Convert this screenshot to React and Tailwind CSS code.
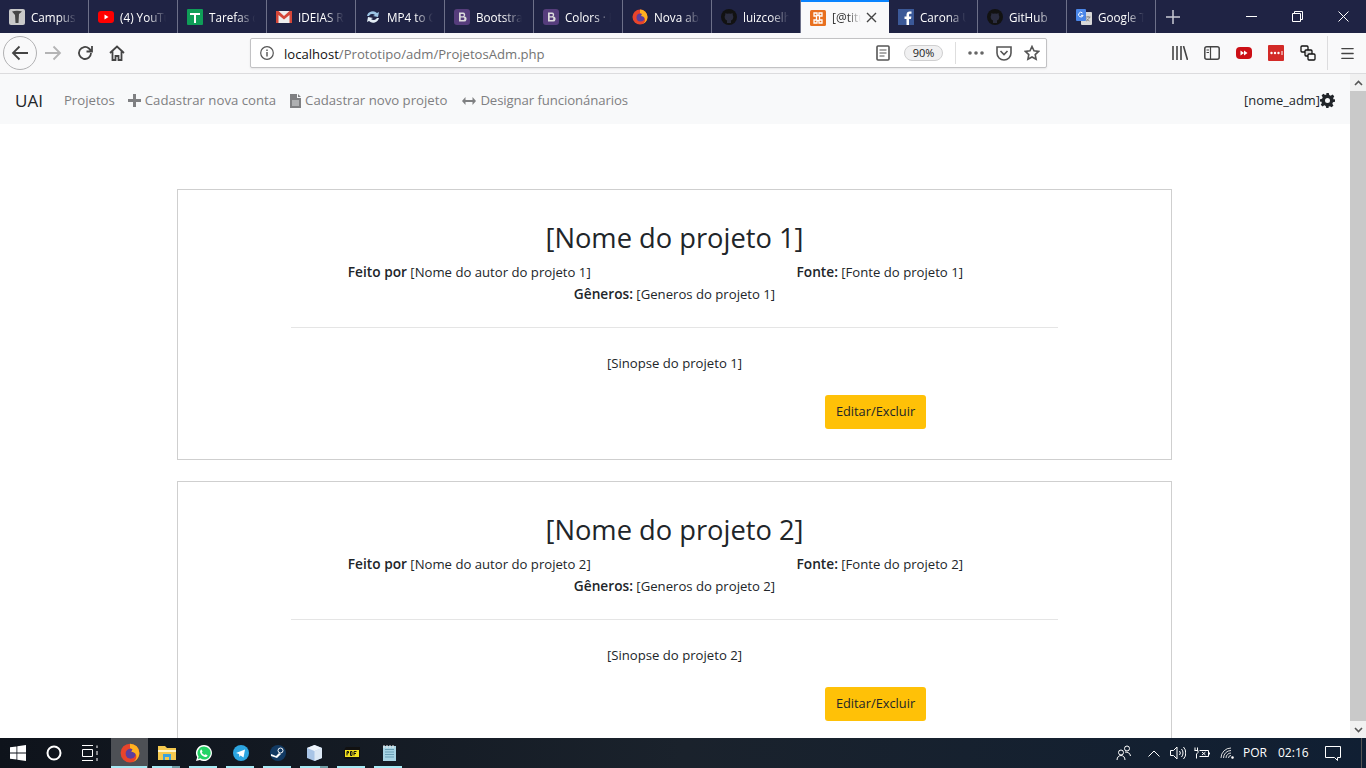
import { Menu } from "lucide-react";

const font = "font-['Open_Sans',sans-serif]";

function Fav({ children }) {
  return (
    <svg width="16" height="16" viewBox="0 0 16 16" className="shrink-0">
      {children}
    </svg>
  );
}

const favCampus = (
  <Fav>
    <rect width="16" height="16" rx="2" fill="#c9c9c9" />
    <path d="M3 2.500c3-1 7-1 10 0l-3 2.500-.5 9h-3l-.5-8z" fill="#444" />
  </Fav>
);
const favYoutube = (
  <Fav>
    <rect x="0" y="2" width="16" height="12" rx="3" fill="#f00" />
    <path d="M6.500 5.500l4 2.500-4 2.500z" fill="#fff" />
  </Fav>
);
const favTasks = (
  <Fav>
    <rect width="16" height="16" rx="1" fill="#0f9d58" />
    <path d="M3 4h10v2H9v8H7V6H3z" fill="#fff" />
  </Fav>
);
const favGmail = (
  <Fav>
    <rect y="2" width="16" height="12" fill="#eee" />
    <path d="M0 2h2.500L8 7l5.500-5H16v12h-2.500V6L8 10.500 2.500 6v8H0z" fill="#d44638" />
  </Fav>
);
const favMp4 = (
  <Fav>
    <path d="M2 7a6 6 0 0 1 10-3l2-1-1 5-5-1 2-1a4 4 0 0 0-6 1z" fill="#9cc4e4" />
    <path d="M14 9a6 6 0 0 1-10 3l-2 1 1-5 5 1-2 1a4 4 0 0 0 6-1z" fill="#e4eef6" />
  </Fav>
);
const favBootstrap = (
  <Fav>
    <rect width="16" height="16" rx="3" fill="#563d7c" />
    <path d="M5 3.500h4a2.200 2.200 0 0 1 1.400 3.900A2.400 2.400 0 0 1 9.500 12.500H5zm1.700 1.500v2.200H8.800a1.100 1.100 0 0 0 0-2.200zm0 3.600V11h2.500a1.200 1.200 0 0 0 0-2.400z" fill="#ddd" fillRule="evenodd" />
  </Fav>
);
const favFirefox = (
  <Fav>
    <circle cx="8" cy="8" r="7.500" fill="#e8442b" />
    <circle cx="8.500" cy="8.500" r="4" fill="#5b3f9e" />
    <path d="M8 .5a7.500 7.500 0 0 1 7.500 7.500c0 3-2 6-5 7 2-1 3-3 2.500-5-.5-2-2.500-3-4-3l1-2-2-1z" fill="#ffb21f" />
  </Fav>
);
const favGithub = (
  <Fav>
    <circle cx="8" cy="8" r="8" fill="#121212" />
    <path d="M4.500 4l1.500.8a6 6 0 0 1 4 0L11.500 4l.3 2a3.800 3.800 0 0 1-1.800 5.500V14H6v-2.500A3.800 3.800 0 0 1 4.200 6z" fill="#2b2d40" />
  </Fav>
);
const favXampp = (
  <Fav>
    <rect width="16" height="16" rx="1.500" fill="#e8701f" />
    <path d="M4 3h3v2.500h2V3h3v3h-2.500v4H12v3H9v-2.500H7V13H4v-3h2.500V6H4z" fill="none" stroke="#fff" strokeWidth="1.300" />
  </Fav>
);
const favFacebook = (
  <Fav>
    <rect width="16" height="16" fill="#3b5998" />
    <path d="M11 16V10h2l.4-2.500H11V6c0-.8.3-1.300 1.300-1.300h1.200V2.500A12 12 0 0 0 11.700 2.400C9.800 2.400 8.500 3.600 8.500 5.700v1.800h-2V10h2v6z" fill="#fff" />
  </Fav>
);
const favTranslate = (
  <Fav>
    <rect x="5" y="3" width="11" height="13" rx="1" fill="#d8d8d8" />
    <rect width="10" height="12" rx="1" fill="#4a86e8" />
    <path d="M6.500 4a2.300 2.300 0 1 0 .6 2.300H5" fill="none" stroke="#fff" strokeWidth="1" />
    <path d="M9.500 8h5M12 7v1M13.500 8c-.5 2-2 3.500-3.500 4M10.500 9.500c.5 1 1.500 2 3 2.500" fill="none" stroke="#777" strokeWidth=".8" />
  </Fav>
);

const tabs = [
  { title: "Campus", icon: favCampus },
  { title: "(4) YouTube", icon: favYoutube },
  { title: "Tarefas do", icon: favTasks },
  { title: "IDEIAS RA", icon: favGmail },
  { title: "MP4 to G", icon: favMp4 },
  { title: "Bootstrap", icon: favBootstrap },
  { title: "Colors · B", icon: favBootstrap },
  { title: "Nova aba", icon: favFirefox },
  { title: "luizcoelho", icon: favGithub },
  { title: "[@titulo", icon: favXampp, active: true },
  { title: "Carona U", icon: favFacebook },
  { title: "GitHub", icon: favGithub },
  { title: "Google T", icon: favTranslate },
];

function Tab({ title, icon, active }) {
  if (active) {
    return (
      <div className="w-[88px] h-[33px] bg-[#f9f9fa] border-t-2 border-[#0a84ff] flex items-center pl-[9px] shrink-0">
        {icon}
        <span className="ml-[6px] w-[29px] overflow-hidden whitespace-nowrap text-[12px] leading-[18px] text-[#333] [mask-image:linear-gradient(to_right,black_55%,transparent)]">
          {title}
        </span>
        <svg width="11" height="11" viewBox="0 0 11 11" className="ml-[5px]">
          <path d="M1 1l9 9M10 1l-9 9" stroke="#444" strokeWidth="1.400" />
        </svg>
      </div>
    );
  }
  return (
    <div className="w-[89px] h-[33px] flex items-center pl-[9px] shrink-0 border-r border-[#6d7089]">
      {icon}
      <span className="ml-[6px] w-[46px] overflow-hidden whitespace-nowrap text-[11.700px] pt-[2px] text-white [mask-image:linear-gradient(to_right,black_60%,transparent)]">
        {title}
      </span>
    </div>
  );
}

function TabBar() {
  return (
    <div className="h-[33px] bg-[#1f2344] flex items-center shrink-0">
      {tabs.map((t) => (
        <Tab key={t.title} {...t} />
      ))}
      <svg width="14" height="14" viewBox="0 0 14 14" className="ml-[10px]">
        <path d="M7 0v14M0 7h14" stroke="#c9cad4" strokeWidth="1.500" />
      </svg>
      <div className="ml-auto flex items-center text-white">
        <div className="w-[46px] flex justify-center">
          <svg width="11" height="11" viewBox="0 0 11 11">
            <path d="M0 5.500h11" stroke="#fff" />
          </svg>
        </div>
        <div className="w-[46px] flex justify-center">
          <svg width="11" height="11" viewBox="0 0 11 11" fill="none" stroke="#fff">
            <path d="M.5 2.500h8v8h-8zM2.500 2.500v-2h8v8h-2" />
          </svg>
        </div>
        <div className="w-[46px] flex justify-center">
          <svg width="11" height="11" viewBox="0 0 11 11">
            <path d="M.5.500l10 10M10.500.500l-10 10" stroke="#fff" />
          </svg>
        </div>
      </div>
    </div>
  );
}

function ToolIcon({ w = 32, children }) {
  return (
    <div className="h-full flex items-center justify-center shrink-0" style={{ width: w }}>
      {children}
    </div>
  );
}

function Toolbar() {
  return (
    <div className="h-[41px] bg-[#f9f9fa] border-b border-[#dcdcde] flex items-center shrink-0 pl-[3px]">
      <div className="w-[34px] h-[34px] rounded-full border border-[#b1b1b3] bg-[#f9f9fa] flex items-center justify-center shrink-0">
        <svg width="18" height="16" viewBox="0 0 18 16" fill="none" stroke="#444" strokeWidth="1.800">
          <path d="M17 8H2M8.500 1.500L2 8l6.500 6.500" />
        </svg>
      </div>
      <ToolIcon>
        <svg width="18" height="16" viewBox="0 0 18 16" fill="none" stroke="#b4b4b5" strokeWidth="1.800">
          <path d="M1 8h15M9.500 1.500L16 8l-6.500 6.500" />
        </svg>
      </ToolIcon>
      <ToolIcon>
        <svg width="16" height="16" viewBox="0 0 16 16" fill="none" stroke="#444" strokeWidth="1.800">
          <path d="M14 8a6 6 0 1 1-2-4.500L14.500 6M15 1v5.500H9.500" />
        </svg>
      </ToolIcon>
      <ToolIcon>
        <svg width="16" height="16" viewBox="0 0 16 16" fill="none" stroke="#444" strokeWidth="1.800">
          <path d="M1 8l7-6.500L15 8M3.500 6.500V15h3v-4h3v4h3V6.500" />
        </svg>
      </ToolIcon>
      <div className="ml-[117px] w-[797px] h-[30px] bg-white border border-[#c2c2c4] rounded-[2px] shadow-[0_1px_2px_rgba(0,0,0,.08)] flex items-center shrink-0">
        <svg width="14" height="14" viewBox="0 0 14 14" fill="none" stroke="#555" className="ml-[9px]">
          <circle cx="7" cy="7" r="6.300" strokeWidth="1.200" />
          <path d="M7 6v4.500M7 3.500v1.500" strokeWidth="1.400" />
        </svg>
        <span className="ml-[10px] pt-[3px] text-[13.100px] text-[#737373] whitespace-nowrap">
          <span className="text-[#111]">localhost</span>/Prototipo/adm/ProjetosAdm.php
        </span>
        <svg width="14" height="16" viewBox="0 0 14 16" fill="none" stroke="#555" className="ml-auto">
          <rect x="1" y="1" width="12" height="14" rx="1" strokeWidth="1.600" />
          <path d="M3.500 5h7M3.500 8h7M3.500 11h5" />
        </svg>
        <div className="ml-[14px] w-[39px] h-[16px] rounded-full border border-[#cfcfd0] bg-[#f0f0f1] text-[11px] text-[#222] flex items-center justify-center">
          90%
        </div>
        <div className="ml-[12px] w-px h-[22px] bg-[#dedede]" />
        <svg width="16" height="4" viewBox="0 0 16 4" fill="#666" className="ml-[12px]">
          <circle cx="2" cy="2" r="1.800" />
          <circle cx="8" cy="2" r="1.800" />
          <circle cx="14" cy="2" r="1.800" />
        </svg>
        <svg width="16" height="15" viewBox="0 0 16 15" fill="none" stroke="#555" strokeWidth="1.600" className="ml-[12px]">
          <path d="M1 1h14v6a7 7 0 0 1-14 0zM4.500 5L8 8.500 11.500 5" />
        </svg>
        <svg width="16" height="16" viewBox="0 0 16 16" fill="none" stroke="#555" strokeWidth="1.600" className="ml-[12px] mr-[6px]">
          <path d="M8 1.500l2 4.300 4.600.6-3.400 3.200.9 4.700L8 12l-4.100 2.300.9-4.700L1.400 6.400 6 5.800z" />
        </svg>
      </div>
      <div className="ml-[117px] flex items-center h-full">
        <ToolIcon>
          <svg width="16" height="14" viewBox="0 0 16 14" fill="none" stroke="#444" strokeWidth="1.600">
            <path d="M1 0v14M5 0v14M9 0v14M11.500 0l4 14" />
          </svg>
        </ToolIcon>
        <ToolIcon>
          <svg width="16" height="14" viewBox="0 0 16 14" fill="none" stroke="#444" strokeWidth="1.500">
            <rect x=".8" y=".8" width="14.400" height="12.400" rx="2" />
            <path d="M6.500 1v12M2.500 4h2.500M2.500 6.500h2.500" strokeWidth="1.200" />
          </svg>
        </ToolIcon>
        <ToolIcon>
          <svg width="16" height="12" viewBox="0 0 16 12">
            <rect width="16" height="12" rx="4" fill="#cc0f16" />
            <path d="M4.500 3.500L8 6l-3.500 2.500zM8 3.500L11.500 6 8 8.500z" fill="#fff" />
          </svg>
        </ToolIcon>
        <ToolIcon>
          <svg width="16" height="16" viewBox="0 0 16 16">
            <rect width="16" height="16" rx="1" fill="#d32a27" />
            <circle cx="3.500" cy="8" r="1.200" fill="#fff" />
            <circle cx="7" cy="8" r="1.200" fill="#fff" />
            <circle cx="10.500" cy="8" r="1.200" fill="#fff" />
            <path d="M14 6v4" stroke="#fff" />
          </svg>
        </ToolIcon>
        <ToolIcon>
          <svg width="16" height="16" viewBox="0 0 16 16" fill="none" stroke="#111" strokeWidth="1.300">
            <rect x="1" y="1" width="7" height="6" rx="1" fill="#f9f9fa" />
            <rect x="5" y="5" width="7" height="6" rx="1" fill="#ddd" />
            <rect x="8" y="9" width="7" height="6" rx="1" fill="#f9f9fa" />
          </svg>
        </ToolIcon>
        <div className="ml-[3px] w-px h-[34px] bg-[#dcdcde]" />
        <ToolIcon w={39}>
          <Menu size={17} color="#444" strokeWidth={1.800} />
        </ToolIcon>
      </div>
    </div>
  );
}

function Navbar() {
  const link = "text-[13.200px] text-[#7f8082] whitespace-nowrap flex items-center";
  return (
    <div className="h-[50px] bg-[#f8f9fa] flex items-center pl-[15px] pr-[15px] pt-[4px] shrink-0">
      <span className="text-[17px] text-[#212529] mr-[21px]">UAI</span>
      <span className={`${link} mr-[13px]`}>Projetos</span>
      <span className={`${link} mr-[14px]`}>
        <svg width="13" height="13" viewBox="0 0 13 13" className="mr-[4px]">
          <path d="M6.500 0v13M0 6.500h13" stroke="#7f8082" strokeWidth="3" />
        </svg>
        Cadastrar nova conta
      </span>
      <span className={`${link} mr-[15px]`}>
        <svg width="11" height="14" viewBox="0 0 11 14" className="mr-[4px]">
          <path d="M0 0h7v4h4v10H0zM8 0l3 3H8z" fill="#7f8082" />
          <path d="M2 7h7M2 9h7M2 11h7" stroke="#f8f9fa" strokeWidth=".8" />
        </svg>
        Cadastrar novo projeto
      </span>
      <span className={`${link} tracking-[-0.1px]`}>
        <svg width="14" height="8" viewBox="0 0 14 8" className="mr-[4px]">
          <path d="M0 4l3.500-4v3h7V0L14 4l-3.500 4V5h-7v3z" fill="#7f8082" />
        </svg>
        Designar funcionánarios
      </span>
      <span className="ml-auto text-[12.900px] text-[#212529] flex items-center whitespace-nowrap">
        [nome_adm]
        <svg width="15" height="15" viewBox="0 0 24 24" fill="#212529">
          <path fillRule="evenodd" d="M10 0h4l.8 3.300 2.300 1 2.900-1.800 2.800 2.800-1.800 2.900 1 2.300L24 10v4l-3.300.8-1 2.300 1.800 2.900-2.800 2.800-2.900-1.800-2.300 1L14 24h-4l-.8-3.300-2.300-1-2.900 1.800-2.800-2.800 1.800-2.900-1-2.300L0 14v-4l3.300-.8 1-2.300L2.500 4l2.800-2.800 2.900 1.800 2.300-1zM12 8a4 4 0 1 0 0 8 4 4 0 0 0 0-8z" />
        </svg>
      </span>
    </div>
  );
}

function ProjectCard({ n }) {
  const label = "font-semibold text-[13.700px]";
  return (
    <div className="w-[995px] h-[271px] shrink-0 border border-[#cfcfcf] pt-[28px] flex flex-col items-center text-[13.150px] text-[#212529]">
      <h1 className="text-[27.300px] leading-[40px] whitespace-nowrap">[Nome do projeto {n}]</h1>
      <div className="w-[821px] grid grid-cols-2 text-center leading-[21px] mt-[3px]">
        <p>
          <b className={label}>Feito por</b> [Nome do autor do projeto {n}]
        </p>
        <p>
          <b className={label}>Fonte:</b> [Fonte do projeto {n}]
        </p>
      </div>
      <p className="leading-[21px]">
        <b className={label}>Gêneros:</b> [Generos do projeto {n}]
      </p>
      <hr className="w-[767px] border-[#e5e5e5] mt-[22px]" />
      <p className="leading-[21px] mt-[25px]">[Sinopse do projeto {n}]</p>
      <div className="w-[767px] flex justify-end pr-[132px] mt-[21px]">
        <button className="w-[101px] h-[34px] bg-[#ffc107] rounded-[3px] text-[12.800px] text-[#212529]">Editar/Excluir</button>
      </div>
    </div>
  );
}

function Scrollbar() {
  return (
    <div className="w-[16px] bg-[#f1f1f1] flex flex-col items-center shrink-0">
      <div className="h-[17px] flex items-center">
        <svg width="9" height="6" viewBox="0 0 9 6" fill="none" stroke="#555" strokeWidth="1.600">
          <path d="M1 5l3.500-3.500L8 5" />
        </svg>
      </div>
      <div className="w-full flex-1 bg-[#c9c9c9]" />
      <div className="h-[17px] flex items-center">
        <svg width="9" height="6" viewBox="0 0 9 6" fill="none" stroke="#555" strokeWidth="1.600">
          <path d="M1 1l3.500 3.500L8 1" />
        </svg>
      </div>
    </div>
  );
}

const taskIcons = [
  { active: true, icon: (
    <svg width="20" height="20" viewBox="0 0 16 16">
      <circle cx="8" cy="8" r="7.500" fill="#e8442b" />
      <circle cx="8.500" cy="8.500" r="4" fill="#5b3f9e" />
      <path d="M8 .5a7.500 7.500 0 0 1 7.500 7.500c0 3-2 6-5 7 2-1 3-3 2.500-5-.5-2-2.500-3-4-3l1-2-2-1z" fill="#ffb21f" />
    </svg>
  ) },
  { split: true, icon: (
    <svg width="18" height="16" viewBox="0 0 18 16">
      <path d="M0 1h7l2 2h9v12H0z" fill="#f5c94f" />
      <path d="M0 5h18v2H0z" fill="#fff3c4" />
      <path d="M5 9h8v6h-2v-3H7v3H5z" fill="#3ba3e0" />
    </svg>
  ) },
  { icon: (
    <svg width="18" height="18" viewBox="0 0 18 18">
      <path d="M9 1a8 8 0 0 0-6.800 12.200L1 17l3.900-1.100A8 8 0 1 0 9 1z" fill="#fff" />
      <path d="M9 2.500a6.500 6.500 0 0 0-5.400 10.100l-.7 2.400 2.500-.7A6.500 6.500 0 1 0 9 2.500z" fill="#25d366" />
      <path d="M6.500 5.500l1 2-.7 1c.5 1 1.500 2 2.700 2.500l1-.8 2 1c0 1-1 2-2.500 1.800C7.500 12.500 5.500 10.500 5 8c0-1.200.5-2.200 1.500-2.500z" fill="#fff" />
    </svg>
  ) },
  { icon: (
    <svg width="16" height="16" viewBox="0 0 16 16">
      <circle cx="8" cy="8" r="8" fill="#2ca5e0" />
      <path d="M3 8l9-3.500-1.500 8L7.500 10.500l-1 1.500-.5-3z" fill="#fff" />
    </svg>
  ) },
  { icon: (
    <svg width="16" height="16" viewBox="0 0 16 16">
      <circle cx="8" cy="8" r="8" fill="#123a63" />
      <circle cx="10.500" cy="5.500" r="2.500" fill="none" stroke="#fff" />
      <path d="M1 9l5 2 3-3 2 1-4 4-6-2z" fill="#fff" />
    </svg>
  ) },
  { split: true, icon: (
    <svg width="15" height="16" viewBox="0 0 15 16">
      <path d="M7.500 0L15 3v10l-7.500 3L0 13V3z" fill="#a8c4e6" />
      <path d="M7.500 6L15 3v10l-7.500 3z" fill="#dce8f5" />
      <path d="M7.500 0L15 3 7.500 6 0 3z" fill="#eef4fb" />
    </svg>
  ) },
  { icon: (
    <svg width="16" height="12" viewBox="0 0 16 12">
      <path d="M2 0h14v12H0V3z" fill="#111" />
      <rect x="1" y="3" width="14" height="7" fill="#f4e21f" />
      <path d="M3 8.500V4.500h1.500v1.500H3M6.500 4.500v4h1.500V4.500zM10 8.500v-4h2.500M10 6.500h2" fill="none" stroke="#111" strokeWidth="1" />
    </svg>
  ) },
  { icon: (
    <svg width="16" height="17" viewBox="0 0 16 17">
      <path d="M2 1h13v15H2z" fill="#a8d4e4" />
      <path d="M4 4.500h9M4 7h9M4 9.500h9M4 12h9" stroke="#6a9fb5" />
      <path d="M3 0v3M6 0v3M9 0v3M12 0v3" stroke="#eee" />
    </svg>
  ) },
];

function Taskbar() {
  return (
    <div className="h-[30px] bg-gradient-to-r from-[#0e131b] via-[#1a222c] to-[#101f33] flex items-center text-white shrink-0">
      <div className="w-[36px] flex justify-center">
        <svg width="16" height="16" viewBox="0 0 16 16" fill="#fff">
          <path d="M0 2.300l6.500-.9v6.200H0zM7.300 1.300L16 0v7.600H7.300zM0 8.400h6.500v6.200L0 13.700zM7.300 8.400H16V16l-8.700-1.300z" />
        </svg>
      </div>
      <div className="w-[36px] flex justify-center">
        <svg width="16" height="16" viewBox="0 0 16 16" fill="none" stroke="#fff" strokeWidth="2">
          <circle cx="8" cy="8" r="6.500" />
        </svg>
      </div>
      <div className="w-[36px] flex justify-center mr-[3px]">
        <svg width="16" height="16" viewBox="0 0 16 16" fill="none" stroke="#fff">
          <path d="M0 .5h11M0 15.500h11M.5 4.500h10v7H.5zM15 .5V3M15 6v4M15 13v3" />
        </svg>
      </div>
      {taskIcons.map((t, i) => (
        <div key={i} className={`w-[37px] h-[30px] shrink-0 flex items-center justify-center relative ${t.active ? "bg-[#4d5055]" : ""}`}>
          {t.icon}
          <div className={`absolute bottom-0 h-[2px] ${t.active ? "left-0 right-[1px]" : "left-[4px] right-[5px]"} ${t.split ? "bg-gradient-to-r from-[#a6eaf5] from-70% to-[#6f9ea6] to-70%" : "bg-[#a6eaf5]"}`} />
        </div>
      ))}
      <div className="ml-auto flex items-center h-full text-[12px]">
        <svg width="16" height="16" viewBox="0 0 16 16" fill="none" stroke="#fff" className="mr-[16px]">
          <circle cx="5" cy="7.500" r="2.500" />
          <circle cx="11" cy="3.500" r="2.500" />
          <path d="M1 15c0-3 2-4.500 4-4.500s4 1.500 4 4.500M9 7c3 0 5 1 5.500 4" />
        </svg>
        <svg width="12" height="7" viewBox="0 0 12 7" fill="none" stroke="#fff" className="mr-[10px]">
          <path d="M.5 6.500L6 1l5.500 5.500" />
        </svg>
        <svg width="16" height="14" viewBox="0 0 16 14" fill="none" stroke="#fff" className="mr-[8px]">
          <path d="M.5 4.500h3L7 1v12L3.500 9.500h-3zM9.500 5a3 3 0 0 1 0 4M11.500 3a6 6 0 0 1 0 8M13.500 1a9 9 0 0 1 0 12" />
        </svg>
        <svg width="16" height="12" viewBox="0 0 16 12" fill="none" stroke="#fff" className="mr-[10px]">
          <path d="M1 .5v3M3.500.5v3M.5 3.500h3.500v2L2.500 7v4.500M5.500 3.500h9v6h-9M15.500 5.500v2M8 5l3.500 3M11.500 5L8 8" />
        </svg>
        <svg width="14" height="12" viewBox="0 0 14 12" fill="none" stroke="#ddd" className="mr-[9px]">
          <path d="M1 11a10 10 0 0 1 10-10M3.500 11A7.500 7.500 0 0 1 11 3.500M6 11a5 5 0 0 1 5-5M8.500 11A2.500 2.500 0 0 1 11 8.500" />
          <circle cx="12.500" cy="10.500" r="1" fill="#fff" />
        </svg>
        <span className="w-[24px] mr-[11px] text-center">POR</span>
        <span className="w-[30px] mr-[17px] text-center">02:16</span>
        <svg width="16" height="15" viewBox="0 0 16 15" fill="none" stroke="#fff" className="mr-[20px]">
          <path d="M.5.500h15v11h-3v3l-3-3H.5z" />
        </svg>
        <div className="w-[1px] h-full bg-[#555] mr-[4px]" />
      </div>
    </div>
  );
}

export default function App() {
  return (
    <div className={`w-[1366px] h-[768px] overflow-hidden flex flex-col bg-white ${font}`}>
      <TabBar />
      <Toolbar />
      <div className="flex-1 flex min-h-0">
        <div className="flex-1 flex flex-col min-w-0 overflow-hidden">
          <Navbar />
          <div className="flex flex-col items-center gap-[21px] pt-[65px] pr-[1px]">
            <ProjectCard n={1} />
            <ProjectCard n={2} />
          </div>
        </div>
        <Scrollbar />
      </div>
      <Taskbar />
    </div>
  );
}
